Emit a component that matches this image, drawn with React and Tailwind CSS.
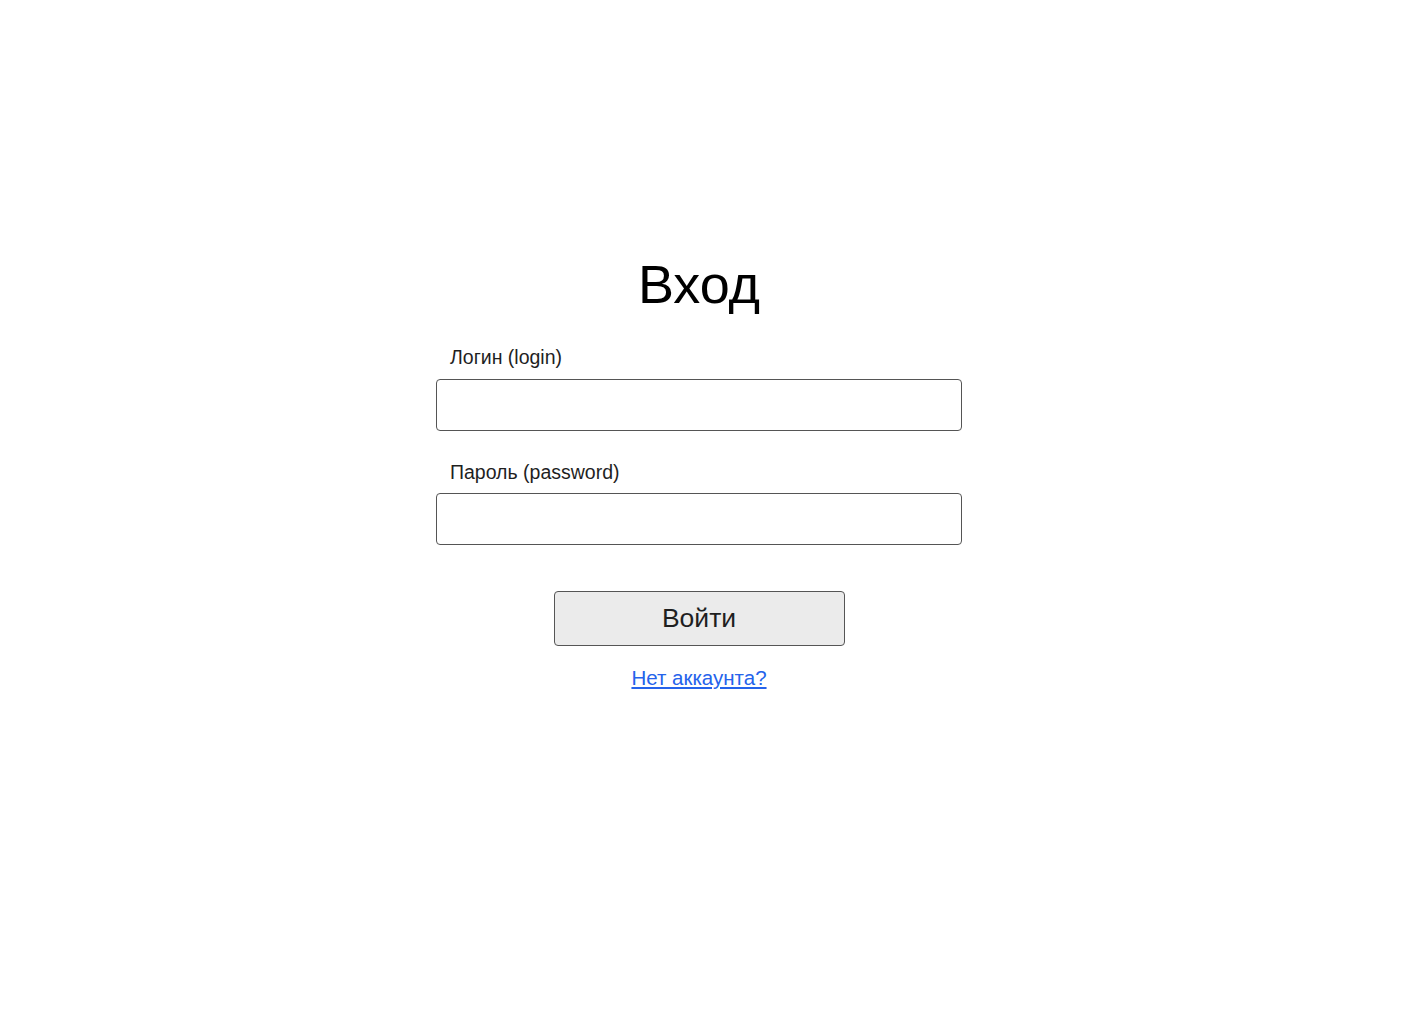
import React from "react";

export default function App() {
  return (
    <div
      className="min-h-screen bg-white flex justify-center pr-[20px]"
      style={{ fontFamily: '"Liberation Sans", Arial, sans-serif' }}
    >
      <form className="w-[526px] mt-[250px] flex flex-col items-center">
        <h1 className="text-[54px] leading-[68px] text-black">Вход</h1>

        <label className="self-start mt-[27px] ml-[14px] text-[19.5px] leading-[24px] text-[#1f1f1f]">
          Логин (login)
        </label>
        <input
          type="text"
          className="mt-[10px] w-full h-[52px] border border-[#555] rounded-[4px] px-3 outline-none"
        />

        <label className="self-start mt-[29px] ml-[14px] text-[19.5px] leading-[24px] text-[#1f1f1f]">
          Пароль (password)
        </label>
        <input
          type="password"
          className="mt-[9px] w-full h-[52px] border border-[#555] rounded-[4px] px-3 outline-none"
        />

        <button
          type="button"
          className="mt-[46px] w-[291px] h-[55px] bg-[#ebebeb] border border-[#555] rounded-[4px] text-[26.5px] text-[#1f1f1f]"
        >
          Войти
        </button>

        <a
          href="#"
          className="mt-[20px] text-[20.5px] leading-[24px] text-[#2563eb] underline"
        >
          Нет аккаунта?
        </a>
      </form>
    </div>
  );
}
